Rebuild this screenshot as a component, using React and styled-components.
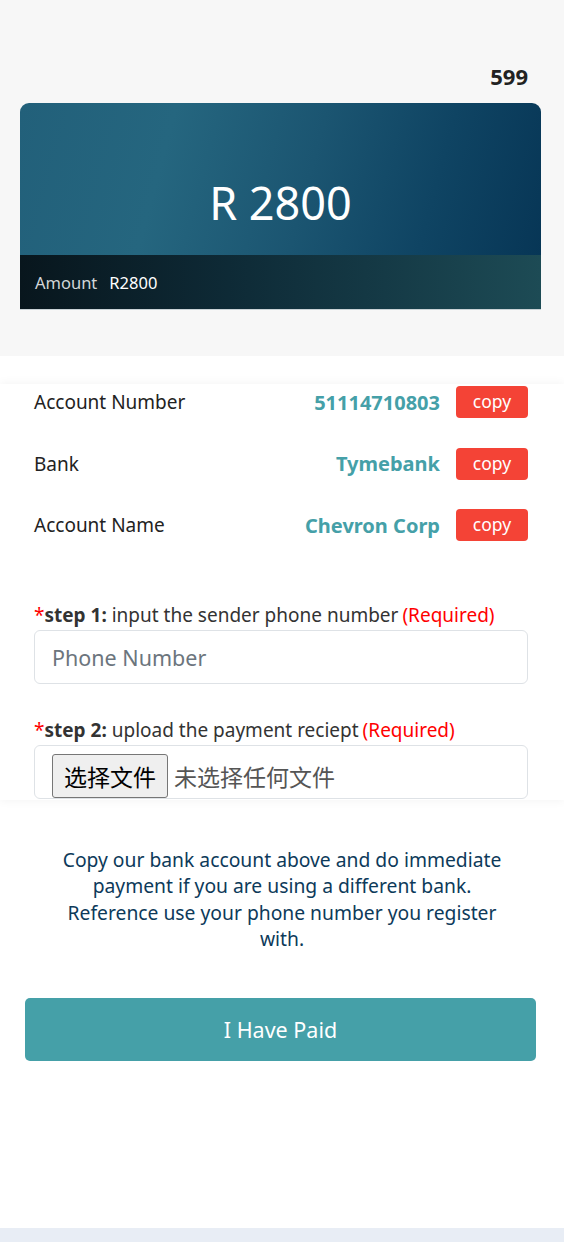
import React, { useState } from "react";
import styled, { createGlobalStyle } from "styled-components";

const GlobalStyle = createGlobalStyle`
  * { box-sizing: border-box; }
  body {
    margin: 0;
    background: #fff;
    font-family: "Noto Sans", "Open Sans", "Noto Sans CJK SC", sans-serif;
    color: #222;
  }
`;

const accounts = [
  { label: "Account Number", value: "51114710803" },
  { label: "Bank", value: "Tymebank" },
  { label: "Account Name", value: "Chevron Corp" },
];

function App() {
  const [phone, setPhone] = useState("");
  const [fileName, setFileName] = useState("");

  const copyValue = (value) => {
    if (navigator.clipboard) navigator.clipboard.writeText(value).catch(() => {});
  };

  return (
    <>
      <GlobalStyle />
      <StyledPage>
        <StyledTop>
          <StyledBalance>599</StyledBalance>
          <StyledCard>
            <div className="card-main">R 2800</div>
            <div className="card-foot">
              <span className="muted">Amount</span>
              <span>R2800</span>
            </div>
          </StyledCard>
        </StyledTop>

        <StyledPanel>
          {accounts.map((item) => (
            <StyledRow key={item.label}>
              <span className="label">{item.label}</span>
              <span className="value">{item.value}</span>
              <CopyButton onClick={() => copyValue(item.value)}>copy</CopyButton>
            </StyledRow>
          ))}

          <StyledStep $top={62}>
            <StepLabel>
              <Star>*</Star>
              <b>step 1:</b> input the sender phone number
              <Required>(Required)</Required>
            </StepLabel>
            <PhoneInput
              type="text"
              placeholder="Phone Number"
              value={phone}
              onChange={(e) => setPhone(e.target.value)}
            />
          </StyledStep>

          <StyledStep $top={34}>
            <StepLabel>
              <Star>*</Star>
              <b>step 2:</b> upload the payment reciept
              <Required>(Required)</Required>
            </StepLabel>
            <FileBox>
              <label className="file-btn">
                选择文件
                <input
                  type="file"
                  onChange={(e) => setFileName(e.target.files[0] ? e.target.files[0].name : "")}
                />
              </label>
              <span className="file-name">{fileName || "未选择任何文件"}</span>
            </FileBox>
          </StyledStep>
        </StyledPanel>

        <StyledNote>
          Copy our bank account above and do immediate payment if you are using a different bank.
          Reference use your phone number you register with.
        </StyledNote>

        <PaidButton>I Have Paid</PaidButton>

        <StyledStrip />
      </StyledPage>
    </>
  );
}

const StyledPage = styled.div`
  display: flex;
  flex-direction: column;
  min-height: 100vh;
`;

const StyledTop = styled.section`
  background: #f7f7f7;
  padding: 63px 23px 46px 20px;
  display: flex;
  flex-direction: column;
`;

const StyledBalance = styled.div`
  align-self: flex-end;
  margin-right: 13px;
  font-size: 22px;
  font-weight: 700;
  line-height: 27px;
  color: #222;
`;

const StyledCard = styled.div`
  margin-top: 13px;
  border-radius: 9px 9px 0 0;
  overflow: hidden;
  color: #fff;
  .card-main {
    height: 152px;
    display: flex;
    align-items: center;
    justify-content: center;
    font-size: 45px;
    padding-top: 46px;
    background: linear-gradient(105deg, #22607a 0%, #25667f 28%, #1b5571 55%, #0f4463 78%, #073656 100%);
  }
  .card-foot {
    height: 55px;
    display: flex;
    align-items: center;
    gap: 12px;
    padding: 0 15px;
    font-size: 16.5px;
    background: linear-gradient(90deg, #08161d 0%, #0e2a36 40%, #153a46 70%, #1d4b55 100%);
    border-bottom: 1px solid #c9d2d6;
  }
  .muted {
    color: #d2d6d8;
  }
`;

const StyledPanel = styled.section`
  margin-top: 28px;
  padding: 2px 36px 1px 34px;
  background: #fff;
  box-shadow: 0 0 10px rgba(0, 0, 0, 0.06);
  height: 416px;
  overflow: hidden;
  display: flex;
  flex-direction: column;
`;

const StyledRow = styled.div`
  display: flex;
  align-items: center;
  height: 32px;
  margin-bottom: 29.5px;
  font-size: 19px;
  &:nth-child(3) { margin-bottom: 0; }
  .label {
    flex: 1;
    color: #222;
  }
  .value {
    color: #45a0a8;
    font-size: 20px;
    font-weight: 700;
    margin-right: 16px;
  }
`;

const CopyButton = styled.button`
  width: 72px;
  height: 32px;
  border: none;
  border-radius: 4px;
  background: #f44336;
  color: #fff;
  font-family: inherit;
  font-size: 17.5px;
  padding: 0 0 2px;
  cursor: pointer;
`;

const StyledStep = styled.div`
  margin-top: ${(p) => p.$top}px;
  display: flex;
  flex-direction: column;
  gap: 3px;
`;

const StepLabel = styled.div`
  font-size: 19px;
  line-height: 24px;
  color: #333;
  white-space: nowrap;
  b { font-weight: 700; }
`;

const Star = styled.span`
  color: #ff0000;
`;

const Required = styled.span`
  color: #ff0000;
  margin-left: 4px;
`;

const PhoneInput = styled.input`
  height: 54px;
  border: 1px solid #dee2e6;
  border-radius: 6px;
  padding: 0 17px;
  font-family: inherit;
  font-size: 21.5px;
  color: #333;
  outline: none;
  &::placeholder { color: #6c757d; }
`;

const FileBox = styled.div`
  height: 54px;
  border: 1px solid #dee2e6;
  border-radius: 6px;
  padding: 8px 17px 0;
  display: flex;
  align-items: flex-start;
  gap: 6px;
  font-family: "Noto Sans CJK SC", "Noto Sans", sans-serif;
  .file-btn {
    height: 44px;
    width: 116px;
    display: flex;
    align-items: center;
    justify-content: center;
    background: #efefef;
    border: 1px solid #767676;
    border-radius: 3px;
    color: #000;
    font-size: 23px;
    cursor: pointer;
    input { display: none; }
  }
  .file-name {
    line-height: 44px;
    font-size: 23px;
    color: #555;
  }
`;

const StyledNote = styled.p`
  margin: 47px 0 0;
  padding: 0 56px;
  text-align: center;
  font-size: 19.3px;
  line-height: 26.4px;
  color: #0d3a5a;
`;

const PaidButton = styled.button`
  margin: 45px 28px 0 25px;
  height: 63px;
  border: none;
  border-radius: 5px;
  background: #45a0a8;
  color: #fff;
  font-family: inherit;
  font-size: 21.5px;
  cursor: pointer;
`;

const StyledStrip = styled.div`
  margin-top: auto;
  height: 14px;
  background: #e8edf5;
`;

export default App;
